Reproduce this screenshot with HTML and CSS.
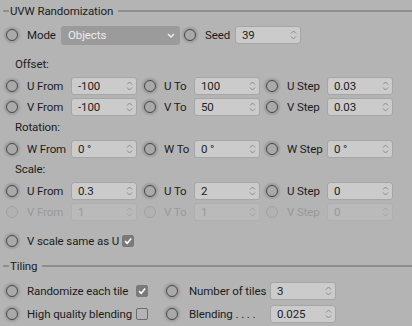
FILE: index.html
```html
<!DOCTYPE html>
<html lang="en">
<head>
    <meta charset="UTF-8">
    <title>UVW Randomization</title>
    <link rel="stylesheet" href="styles.css">
</head>
<body>
    <div class="group-title"><span>UVW Randomization</span></div>

    <div class="row mode-row">
        <span class="radio"></span>
        <span class="label mode-label">Mode</span>
        <span class="dropdown">Objects
            <svg class="chev" width="8" height="5" viewBox="0 0 8 5"><path d="M1 1 L4 4 L7 1" fill="none" stroke="#f2f2f2" stroke-width="1.3"/></svg>
        </span>
        <span class="radio seed-radio"></span>
        <span class="label seed-label">Seed</span>
        <span class="num">39<svg class="spin" width="7" height="12" viewBox="0 0 7 12"><path d="M1 4.5 L3.5 2 L6 4.5 M1 7.5 L3.5 10 L6 7.5" fill="none" stroke="#8a8a8a" stroke-width="1"/></svg></span>
    </div>

    <div class="section">Offset:</div>
    <div class="row triple">
        <span class="radio"></span><span class="label">U From</span><span class="num">-100<svg class="spin" width="7" height="12" viewBox="0 0 7 12"><path d="M1 4.5 L3.5 2 L6 4.5 M1 7.5 L3.5 10 L6 7.5" fill="none" stroke="#8a8a8a" stroke-width="1"/></svg></span>
        <span class="radio"></span><span class="label">U To</span><span class="num">100<svg class="spin" width="7" height="12" viewBox="0 0 7 12"><path d="M1 4.5 L3.5 2 L6 4.5 M1 7.5 L3.5 10 L6 7.5" fill="none" stroke="#8a8a8a" stroke-width="1"/></svg></span>
        <span class="radio"></span><span class="label">U Step</span><span class="num">0.03<svg class="spin" width="7" height="12" viewBox="0 0 7 12"><path d="M1 4.5 L3.5 2 L6 4.5 M1 7.5 L3.5 10 L6 7.5" fill="none" stroke="#8a8a8a" stroke-width="1"/></svg></span>
    </div>
    <div class="row triple">
        <span class="radio"></span><span class="label">V From</span><span class="num">-100<svg class="spin" width="7" height="12" viewBox="0 0 7 12"><path d="M1 4.5 L3.5 2 L6 4.5 M1 7.5 L3.5 10 L6 7.5" fill="none" stroke="#8a8a8a" stroke-width="1"/></svg></span>
        <span class="radio"></span><span class="label">V To</span><span class="num">50<svg class="spin" width="7" height="12" viewBox="0 0 7 12"><path d="M1 4.5 L3.5 2 L6 4.5 M1 7.5 L3.5 10 L6 7.5" fill="none" stroke="#8a8a8a" stroke-width="1"/></svg></span>
        <span class="radio"></span><span class="label">V Step</span><span class="num">0.03<svg class="spin" width="7" height="12" viewBox="0 0 7 12"><path d="M1 4.5 L3.5 2 L6 4.5 M1 7.5 L3.5 10 L6 7.5" fill="none" stroke="#8a8a8a" stroke-width="1"/></svg></span>
    </div>

    <div class="section">Rotation:</div>
    <div class="row triple">
        <span class="radio"></span><span class="label">W From</span><span class="num">0 °<svg class="spin" width="7" height="12" viewBox="0 0 7 12"><path d="M1 4.5 L3.5 2 L6 4.5 M1 7.5 L3.5 10 L6 7.5" fill="none" stroke="#8a8a8a" stroke-width="1"/></svg></span>
        <span class="radio"></span><span class="label">W To</span><span class="num">0 °<svg class="spin" width="7" height="12" viewBox="0 0 7 12"><path d="M1 4.5 L3.5 2 L6 4.5 M1 7.5 L3.5 10 L6 7.5" fill="none" stroke="#8a8a8a" stroke-width="1"/></svg></span>
        <span class="radio"></span><span class="label">W Step</span><span class="num">0 °<svg class="spin" width="7" height="12" viewBox="0 0 7 12"><path d="M1 4.5 L3.5 2 L6 4.5 M1 7.5 L3.5 10 L6 7.5" fill="none" stroke="#8a8a8a" stroke-width="1"/></svg></span>
    </div>

    <div class="section">Scale:</div>
    <div class="row triple">
        <span class="radio"></span><span class="label">U From</span><span class="num">0.3<svg class="spin" width="7" height="12" viewBox="0 0 7 12"><path d="M1 4.5 L3.5 2 L6 4.5 M1 7.5 L3.5 10 L6 7.5" fill="none" stroke="#8a8a8a" stroke-width="1"/></svg></span>
        <span class="radio"></span><span class="label">U To</span><span class="num">2<svg class="spin" width="7" height="12" viewBox="0 0 7 12"><path d="M1 4.5 L3.5 2 L6 4.5 M1 7.5 L3.5 10 L6 7.5" fill="none" stroke="#8a8a8a" stroke-width="1"/></svg></span>
        <span class="radio"></span><span class="label">U Step</span><span class="num">0<svg class="spin" width="7" height="12" viewBox="0 0 7 12"><path d="M1 4.5 L3.5 2 L6 4.5 M1 7.5 L3.5 10 L6 7.5" fill="none" stroke="#8a8a8a" stroke-width="1"/></svg></span>
    </div>
    <div class="row triple disabled">
        <span class="radio"></span><span class="label">V From</span><span class="num">1<svg class="spin" width="7" height="12" viewBox="0 0 7 12"><path d="M1 4.5 L3.5 2 L6 4.5 M1 7.5 L3.5 10 L6 7.5" fill="none" stroke="#a4a4a4" stroke-width="1"/></svg></span>
        <span class="radio"></span><span class="label">V To</span><span class="num">1<svg class="spin" width="7" height="12" viewBox="0 0 7 12"><path d="M1 4.5 L3.5 2 L6 4.5 M1 7.5 L3.5 10 L6 7.5" fill="none" stroke="#a4a4a4" stroke-width="1"/></svg></span>
        <span class="radio"></span><span class="label">V Step</span><span class="num">0<svg class="spin" width="7" height="12" viewBox="0 0 7 12"><path d="M1 4.5 L3.5 2 L6 4.5 M1 7.5 L3.5 10 L6 7.5" fill="none" stroke="#a4a4a4" stroke-width="1"/></svg></span>
    </div>

    <div class="row same-row">
        <span class="radio"></span>
        <span class="label same-label">V scale same as U</span>
        <span class="check checked"><svg width="12" height="12" viewBox="0 0 12 12"><path d="M3 6.2 L5.2 8.3 L9.2 3.6" fill="none" stroke="#fff" stroke-width="1.6"/></svg></span>
    </div>

    <div class="group-title tiling-title"><span>Tiling</span></div>

    <div class="row tile-row">
        <span class="radio"></span>
        <span class="label tile-label">Randomize each tile</span>
        <span class="check checked"><svg width="12" height="12" viewBox="0 0 12 12"><path d="M3 6.2 L5.2 8.3 L9.2 3.6" fill="none" stroke="#fff" stroke-width="1.6"/></svg></span>
        <span class="radio tile-radio"></span>
        <span class="label count-label">Number of tiles</span>
        <span class="num">3<svg class="spin" width="7" height="12" viewBox="0 0 7 12"><path d="M1 4.5 L3.5 2 L6 4.5 M1 7.5 L3.5 10 L6 7.5" fill="none" stroke="#8a8a8a" stroke-width="1"/></svg></span>
    </div>
    <div class="row tile-row">
        <span class="radio"></span>
        <span class="label tile-label">High quality blending</span>
        <span class="check"></span>
        <span class="radio tile-radio"></span>
        <span class="label count-label">Blending . . . .</span>
        <span class="num">0.025<svg class="spin" width="7" height="12" viewBox="0 0 7 12"><path d="M1 4.5 L3.5 2 L6 4.5 M1 7.5 L3.5 10 L6 7.5" fill="none" stroke="#8a8a8a" stroke-width="1"/></svg></span>
    </div>
</body>
</html>
```

FILE: styles.css
```css
body {
    margin: 0;
    padding: 0 0 0 6px;
    background-color: #b4b4b4;
    font-family: 'Roboto', 'Segoe UI', sans-serif;
    font-size: 11.5px;
    letter-spacing: -0.1px;
    color: #1c1c1c;
    overflow: hidden;
}

.group-title {
    display: flex;
    align-items: center;
    height: 22px;
    margin-left: -3px;
}

.group-title::before {
    content: "";
    width: 6px;
    height: 2px;
    background-color: #8e8e8e;
    margin-right: 1px;
}

.group-title::after {
    content: "";
    flex: 1;
    height: 2px;
    background-color: #8e8e8e;
    margin-left: 5px;
}

.tiling-title {
    margin-top: 3px;
    margin-bottom: 2px;
}

.row {
    display: flex;
    align-items: center;
    height: 21px;
}

.row > span {
    flex-shrink: 0;
}

.mode-row {
    height: 20px;
    margin-top: 3px;
    margin-bottom: 9px;
}

.section {
    height: 21px;
    line-height: 21px;
    padding-left: 9px;
}

.triple {
    display: grid;
    grid-template-columns: 12px 53px 73px 12px 38px 72px 12px 49px 66px;
    align-items: center;
}

.label {
    box-sizing: border-box;
    padding-left: 9px;
    white-space: nowrap;
}

.triple .label:nth-child(5) {
    padding-left: 8px;
}

.radio {
    width: 12px;
    height: 12px;
    box-sizing: border-box;
    border-radius: 50%;
    border: 1.6px solid #484848;
    background-color: #a9a9a9;
    box-shadow: 0 0 2px 2px rgba(0, 0, 0, 0.13);
}

.num {
    position: relative;
    width: 66px;
    height: 18px;
    box-sizing: border-box;
    padding-left: 6px;
    line-height: 16px;
    border: 1px solid #a6a6a6;
    border-radius: 3px;
    background-color: #cbcbcb;
    color: #222;
}

.spin {
    position: absolute;
    right: 3px;
    top: 2px;
}

.mode-label {
    width: 43px;
}

.dropdown {
    position: relative;
    width: 119px;
    height: 19px;
    box-sizing: border-box;
    padding-left: 7px;
    line-height: 18px;
    border-radius: 3px;
    background-color: #9b9b9b;
    color: #ececec;
}

.chev {
    position: absolute;
    right: 5px;
    top: 7px;
}

.seed-radio {
    margin-left: 4px;
}

.seed-label {
    width: 39px;
}

.disabled .label,
.disabled .num {
    color: #999;
}

.disabled .num {
    background-color: #bababa;
    border-color: #b0b0b0;
}

.disabled .radio {
    border-color: #a2a2a2;
    background-color: #b2b2b2;
    box-shadow: none;
}

.same-row {
    height: 22px;
    margin-top: 8px;
}

.same-label {
    min-width: 99px;
    padding-right: 3px;
}

.check {
    width: 12px;
    height: 12px;
    box-sizing: border-box;
    border: 1px solid #6c6c6c;
    border-radius: 2px;
}

.check svg {
    display: block;
    margin: -1px;
}

.check.checked {
    background-color: #7a7a7a;
    border-color: #7a7a7a;
}

.tile-row {
    height: 23px;
}

.tile-label {
    width: 118px;
}

.tile-radio {
    margin-left: 18px;
}

.count-label {
    width: 92px;
    padding-left: 11px;
}
```
